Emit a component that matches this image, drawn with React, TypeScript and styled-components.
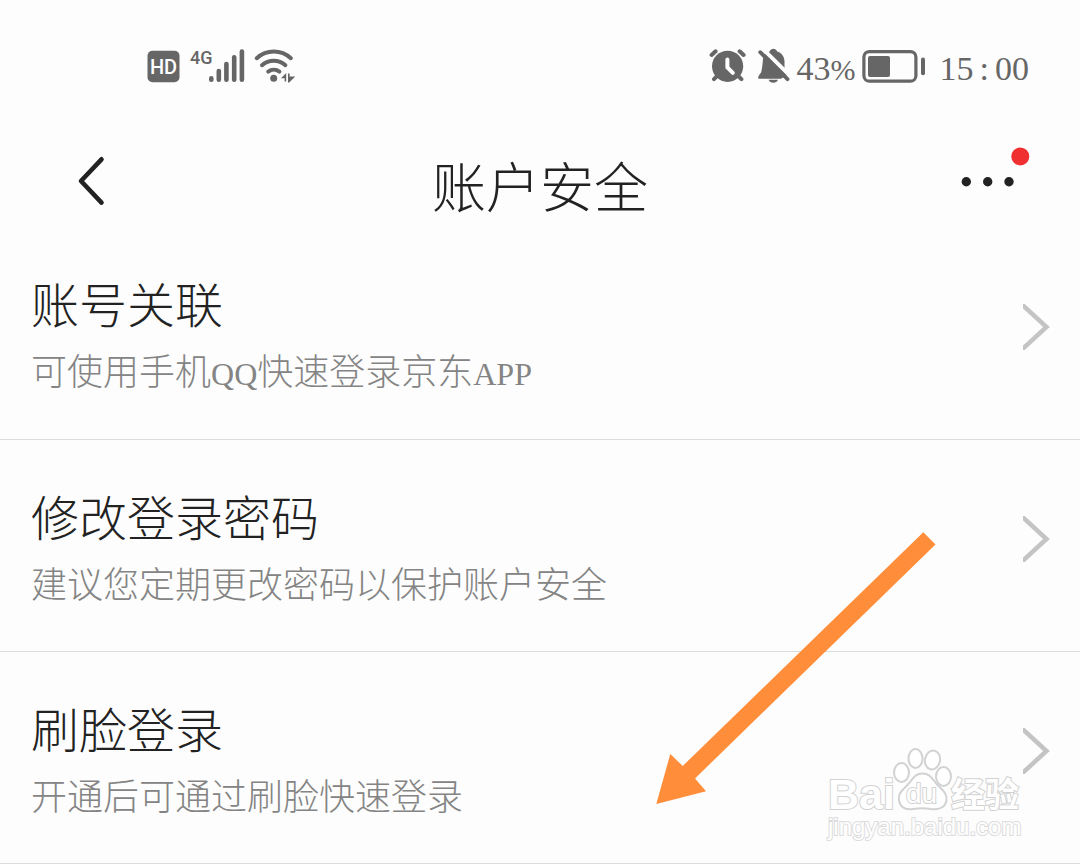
import React from 'react';
import styled, { createGlobalStyle } from 'styled-components';

const GlobalStyle = createGlobalStyle`
  * { box-sizing: border-box; }
  body {
    margin: 0;
    background: #fdfdfd;
    color: #222;
    font-family: 'Liberation Serif', 'Noto Sans CJK SC', serif;
    font-weight: 300;
  }
`;

const Page = styled.div`
  position: relative;
  overflow: hidden;
`;

const StatusBar = styled.div`
  display: flex;
  justify-content: space-between;
  align-items: center;
  height: 135px;
  padding: 0 51px 3px 147px;
  color: #666;
`;

const StatusGroup = styled.div`
  display: flex;
  align-items: center;
  gap: 6px;
`;

const StatusText = styled.span`
  font-size: 34px;
  line-height: 40px;
  padding-top: 6px;
`;

const Percent = styled.span`
  font-size: 30px;
`;

const Colon = styled.span`
  padding: 0 6px;
`;

const Clock = styled(StatusText)`
  padding-left: 8px;
`;

const Header = styled.header`
  display: grid;
  grid-template-columns: 1fr auto 1fr;
  align-items: center;
  height: 92px;
  padding: 0 48px 0 72px;
`;

const Title = styled.h1`
  margin: 0;
  padding: 18px 24px 0 0;
  font-size: 54px;
  line-height: 64px;
  font-weight: 300;
`;

const IconButton = styled.button<{ $end?: boolean }>`
  display: flex;
  justify-self: ${(p) => (p.$end ? 'end' : 'start')};
  padding: 0;
  border: 0;
  background: none;
  cursor: pointer;
`;

const List = styled.ul`
  margin: 0;
  padding: 0;
  list-style: none;
`;

const Row = styled.li`
  border-bottom: 1px solid #dcdcdc;
`;

const RowLink = styled.a`
  display: flex;
  align-items: center;
  justify-content: space-between;
  padding: 50px 30px 41px 31px;
  color: inherit;
  text-decoration: none;
`;

const RowTitle = styled.div`
  font-size: 48px;
  line-height: 60px;
`;

const RowNote = styled.div`
  margin-top: 12px;
  font-size: 36px;
  line-height: 48px;
  color: #848484;
`;

const Latin = styled.span`
  font-size: 32px;
`;

const ChevronIcon = styled.svg`
  flex: none;
  margin-bottom: 22px;
`;

const Pointer = styled.svg`
  position: absolute;
  top: 532px;
  right: 144px;
  pointer-events: none;
`;

const Watermark = styled.svg`
  position: absolute;
  top: 744px;
  right: 54px;
  pointer-events: none;
  fill: #fff;
  stroke: #d2d2d2;
  stroke-width: 2;

  text {
    font-family: 'Liberation Sans', 'Noto Sans CJK SC', sans-serif;
    paint-order: stroke;
  }
`;

const BadgeText = styled.text`
  font-family: Roboto, sans-serif;
  font-size: 20px;
  font-weight: 500;
`;

const NetworkText = styled.text`
  font-family: Roboto, sans-serif;
  font-size: 18px;
  font-weight: 500;
`;

const SignalIcons = () => (
  <svg width="150" height="40" viewBox="147 46 150 40" fill="#666" role="img" aria-label="HD 4G Wi-Fi">
    <rect x="147.5" y="50.7" width="32" height="31.6" rx="5" />
    <BadgeText x="163.5" y="73.8" fill="#fff" textAnchor="middle">HD</BadgeText>
    <NetworkText x="190" y="64">4G</NetworkText>
    <g stroke="#666" strokeWidth="4.6" strokeLinecap="round" fill="none">
      <path d="M211.3 78.3v1.4M218.8 71v8.7M226.4 64v15.7M234.2 57.3v22.4M241.9 51.6v28.1" />
    </g>
    <g stroke="#666" strokeWidth="4" strokeLinecap="round" fill="none">
      <path d="M256.8 58.2A25 25 0 0 1 290.8 58.2" />
      <path d="M262 65.2A17.5 17.5 0 0 1 285.4 65.2" />
      <path d="M268.2 71.6A9.5 9.5 0 0 1 279.4 71.6" />
    </g>
    <circle cx="273.7" cy="78.3" r="3.5" />
    <path d="M281 78.2l5.2-5.2v8.6h-1.6v-3.4zM288 73.4h1.6v3h5.6l-6 6H288z" />
  </svg>
);

const AlarmIcon = () => (
  <svg width="42" height="38" viewBox="709 48 42 38" fill="none" stroke="#666" strokeWidth="4" strokeLinecap="round" aria-hidden="true">
    <circle cx="727.6" cy="67.3" r="15.6" fill="#666" stroke="none" />
    <path d="M711.6 56l4-3.7M739.6 52.3l4 3.7M714 80.2l3-3M738.4 77.2l3 3" />
    <path d="M727.4 60.6v7.8l5.4 5.4" stroke="#fff" />
  </svg>
);

const MutedIcon = () => (
  <svg width="34" height="38" viewBox="756 48 34 38" aria-hidden="true">
    <path fill="#666" d="M757.3 79.8v-2.2l3-4.6 1-6 .8-8c1-4 4-6 6.6-6.6 1.2-3.6 6.2-3.6 7.4 0 4.2 1.2 7.4 5 7.4 9.8v9l2.5 5-6 3.6zM767.6 80.8h9.4c-1.2 4-8.2 4-9.4 0z" />
    <path d="M761.6 49.6l28.2 28" stroke="#fdfdfd" strokeWidth="4" fill="none" />
    <path d="M759.2 53.2l27.3 27" stroke="#666" strokeWidth="3.8" strokeLinecap="round" fill="none" />
  </svg>
);

const BatteryIcon = () => (
  <svg width="64" height="34" viewBox="863 49 64 34" fill="#666" aria-hidden="true">
    <rect x="864.9" y="51.6" width="52" height="29.6" rx="5.5" fill="none" stroke="#666" strokeWidth="3.2" />
    <rect x="869" y="56" width="22" height="21" rx="2" />
    <rect x="922" y="57.6" width="4" height="17.6" rx="2" />
  </svg>
);

const Chevron = () => (
  <ChevronIcon width="27" height="46" viewBox="0 0 27 46" fill="none" stroke="#c4c4c4" strokeWidth="4.5" aria-hidden="true">
    <path d="M-1 .5L23.5 23L-1 45.5" />
  </ChevronIcon>
);

const items: { title: string; note: React.ReactNode }[] = [
  {
    title: '账号关联',
    note: <>可使用手机<Latin>QQ</Latin>快速登录京东<Latin>APP</Latin></>,
  },
  { title: '修改登录密码', note: '建议您定期更改密码以保护账户安全' },
  { title: '刷脸登录', note: '开通后可通过刷脸快速登录' },
];

export default function App() {
  return (
    <Page>
      <GlobalStyle />
      <StatusBar>
        <SignalIcons />
        <StatusGroup>
          <AlarmIcon />
          <MutedIcon />
          <StatusText>43<Percent>%</Percent></StatusText>
          <BatteryIcon />
          <Clock>15<Colon>:</Colon>00</Clock>
        </StatusGroup>
      </StatusBar>
      <Header>
        <IconButton type="button" aria-label="返回">
          <svg width="40" height="56" viewBox="72 153 40 56" fill="none" stroke="#222" strokeWidth="4.6" strokeLinecap="round" strokeLinejoin="round">
            <path d="M101.5 159.3L81 181L101.5 202.6" />
          </svg>
        </IconButton>
        <Title>账户安全</Title>
        <IconButton type="button" $end aria-label="更多">
          <svg width="72" height="72" viewBox="960 145 72 72" fill="#222">
            <circle cx="966.3" cy="181.7" r="4.7" />
            <circle cx="987.7" cy="181.7" r="4.7" />
            <circle cx="1009" cy="181.7" r="4.7" />
            <circle cx="1020.3" cy="156.4" r="9" fill="#f03030" />
          </svg>
        </IconButton>
      </Header>
      <main>
        <List>
          {items.map((item) => (
            <Row key={item.title}>
              <RowLink href="#">
                <div>
                  <RowTitle>{item.title}</RowTitle>
                  <RowNote>{item.note}</RowNote>
                </div>
                <Chevron />
              </RowLink>
            </Row>
          ))}
        </List>
      </main>
      <Pointer width="280" height="272" viewBox="656 532 280 272" fill="#ff8d3a" aria-hidden="true">
        <path d="M923.3 532.3L935.5 544.5L695 778.5L706 791.3L656.3 804L670.3 754L682.7 766Z" />
      </Pointer>
      <Watermark width="200" height="100" viewBox="826 744 200 100">
        <text x="828" y="809" fontSize="43" fontWeight="700">Bai</text>
        <ellipse cx="901.5" cy="772.5" rx="7.5" ry="9.5" />
        <ellipse cx="915.5" cy="758.5" rx="7" ry="9.5" />
        <ellipse cx="932.5" cy="760" rx="7.5" ry="9.5" transform="rotate(12 932.5 760)" />
        <ellipse cx="943.5" cy="776.5" rx="7.5" ry="9.5" />
        <path d="M922.5 773.5c-8 0-10 6-15 11.5-5 5-10 8.5-8.5 15.5 1.5 8 8 9.5 14 8.5 6-1 12-1 18 0 7 1 14-1 15.5-8.5 1-7-4-10.5-9-15.5-5-5.5-7-11.5-15-11.5z" />
        <text x="906" y="803" fontSize="28">du</text>
        <text x="951" y="807" fontSize="34" fontWeight="700">经验</text>
        <text x="828" y="835" fontSize="24" stroke="#dcdcdc">jingyan.baidu.com</text>
      </Watermark>
    </Page>
  );
}
